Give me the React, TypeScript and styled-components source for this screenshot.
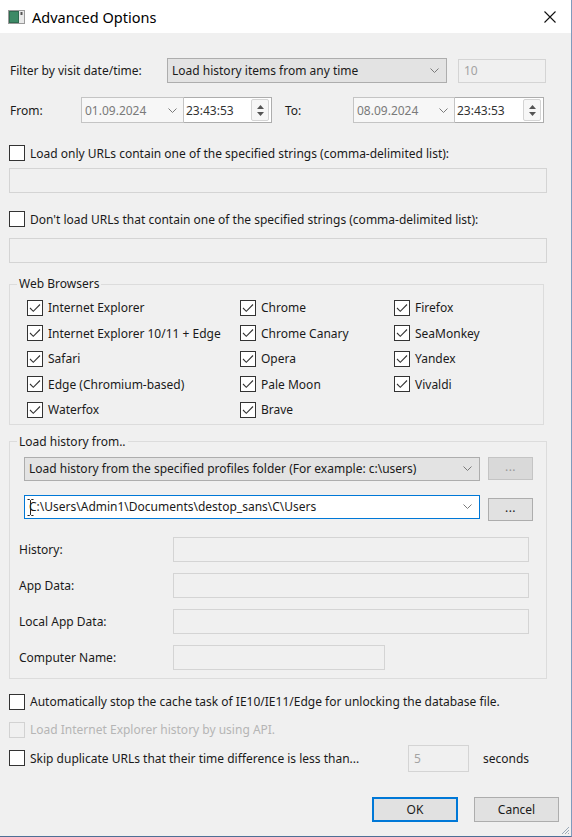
import React from 'react';
import styled, { createGlobalStyle } from 'styled-components';

const Global = createGlobalStyle`
  html, body { margin: 0; padding: 0; background: #f0f0f0; }
  body {
    font-family: "Noto Sans", "DejaVu Sans", sans-serif;
    font-size: 12px;
    color: #1a1a1a;
  }
  * { box-sizing: border-box; }
`;

const Window = styled.div`
  width: 572px;
  height: 837px;
  background: #f0f0f0;
  border-right: 1px solid #7f9bbd;
  border-bottom: 1px solid #4f6f96;
  display: flex;
  flex-direction: column;
  position: relative;
  overflow: hidden;
`;

const TitleBar = styled.div`
  height: 33px;
  flex-shrink: 0;
  background: #ffffff;
  display: flex;
  align-items: center;
  padding: 0 15px 0 8px;
`;

const TitleText = styled.span`
  flex: 1;
  margin-left: 7px;
  font-family: "Noto Sans", "Open Sans", sans-serif;
  font-size: 14.5px;
  color: #000;
`;

const Body = styled.div`
  display: flex;
  flex-direction: column;
  padding-left: 9px;
`;

const Row = styled.div<{ $top: number; $h: number }>`
  display: flex;
  align-items: center;
  margin-top: ${(p) => p.$top}px;
  height: ${(p) => p.$h}px;
  flex-shrink: 0;
`;

const Label = styled.span<{ $w: number; $pl?: number; $ml?: number }>`
  width: ${(p) => p.$w}px;
  padding-left: ${(p) => p.$pl ?? 0}px;
  margin-left: ${(p) => p.$ml ?? 0}px;
  flex-shrink: 0;
  white-space: nowrap;
`;

const Combo = styled.div<{ $w: number; $h: number; $focus?: boolean }>`
  position: relative;
  width: ${(p) => p.$w}px;
  height: ${(p) => p.$h}px;
  flex-shrink: 0;
  display: flex;
  align-items: center;
  padding: 0 7px 0 4px;
  background: ${(p) => (p.$focus ? '#ffffff' : '#e3e3e3')};
  border: 1px solid ${(p) => (p.$focus ? '#0078d7' : '#adadad')};
`;

const ComboText = styled.span`
  flex: 1;
  white-space: nowrap;
  overflow: hidden;
`;

const Field = styled.div<{ $w: number; $h: number; $ml?: number }>`
  width: ${(p) => p.$w}px;
  height: ${(p) => p.$h}px;
  margin-left: ${(p) => p.$ml ?? 0}px;
  flex-shrink: 0;
  display: flex;
  align-items: center;
  padding-left: 5px;
  background: #f0f0f0;
  border: 1px solid #d4d4d4;
  color: #a3a3a3;
`;

const DatePart = styled.div<{ $w: number }>`
  width: ${(p) => p.$w}px;
  height: 26px;
  flex-shrink: 0;
  display: flex;
  align-items: center;
  padding: 0 6px 0 3px;
  background: #f7f7f7;
  border: 1px solid #c4c4c4;
  color: #7a7a7a;
`;

const TimePart = styled.div<{ $w: number }>`
  width: ${(p) => p.$w}px;
  height: 26px;
  flex-shrink: 0;
  display: flex;
  align-items: center;
  padding: 0 2px 0 2px;
  background: #ffffff;
  border: 1px solid #adadad;
  border-left: none;
  color: #333;
`;

const Spin = styled.div`
  width: 18px;
  height: 22px;
  border: 1px solid #d4d4d4;
  border-radius: 2px;
  background: #f7f7f7;
  display: flex;
  flex-direction: column;
  align-items: center;
  justify-content: space-around;
  padding: 3px 0;
`;

const CheckRow = styled.div<{ $top: number; $w?: number; $disabled?: boolean }>`
  display: flex;
  align-items: center;
  gap: 5px;
  height: 16px;
  margin-top: ${(p) => p.$top}px;
  width: ${(p) => (p.$w ? `${p.$w}px` : 'auto')};
  flex-shrink: 0;
  white-space: nowrap;
  color: ${(p) => (p.$disabled ? '#b5b5b5' : '#1a1a1a')};
`;

const Box = styled.span<{ $disabled?: boolean }>`
  width: 16px;
  height: 16px;
  flex-shrink: 0;
  border: 1px solid ${(p) => (p.$disabled ? '#d2d2d2' : '#333333')};
  background: ${(p) => (p.$disabled ? '#f0f0f0' : '#ffffff')};
  display: flex;
  align-items: center;
  justify-content: center;
`;

const WideField = styled.div<{ $top: number }>`
  width: 538px;
  height: 25px;
  margin-top: ${(p) => p.$top}px;
  background: #f0f0f0;
  border: 1px solid #d4d4d4;
  flex-shrink: 0;
`;

const Group = styled.fieldset<{ $top: number; $w: number }>`
  margin: ${(p) => p.$top}px 0 0 0;
  padding: 0;
  width: ${(p) => p.$w}px;
  border: 1px solid #dcdcdc;
  min-inline-size: auto;
  flex-shrink: 0;
`;

const Legend = styled.legend`
  margin-left: 7px;
  padding: 0 2px;
  line-height: 14px;
  font-size: 12px;
`;

const BrowserGrid = styled.div`
  display: grid;
  grid-template-columns: 213px 154px 1fr;
  grid-auto-rows: 25.5px;
  align-items: center;
  padding: 4px 0 1px 17px;
`;

const LoadInner = styled.div`
  display: flex;
  flex-direction: column;
  padding: 0 0 8px 9px;
`;

const ComboRow = styled.div<{ $top: number }>`
  display: flex;
  align-items: flex-start;
  margin-top: ${(p) => p.$top}px;
  padding-left: 5px;
`;

const DotsButton = styled.div<{ $disabled?: boolean; $mt?: number }>`
  width: 45px;
  height: 23px;
  margin-left: 8px;
  margin-top: ${(p) => p.$mt ?? 0}px;
  display: flex;
  align-items: center;
  justify-content: center;
  background: ${(p) => (p.$disabled ? '#d9d9d9' : '#e1e1e1')};
  border: 1px solid ${(p) => (p.$disabled ? '#c4c4c4' : '#adadad')};
  color: ${(p) => (p.$disabled ? '#9a9a9a' : '#222')};
  letter-spacing: 0.5px;
  padding-bottom: 3px;
`;

const ButtonBar = styled.div`
  display: flex;
  justify-content: flex-end;
  gap: 16px;
  margin-top: 25px;
  padding-right: 12px;
`;

const Button = styled.div<{ $default?: boolean; $w: number }>`
  width: ${(p) => p.$w}px;
  height: 25px;
  display: flex;
  align-items: center;
  justify-content: center;
  background: #e1e1e1;
  border: ${(p) => (p.$default ? '2px solid #0078d7' : '1px solid #adadad')};
  color: #1a1a1a;
`;

const Grip = styled.svg`
  position: absolute;
  right: 1px;
  bottom: 1px;
`;

const MouseCursor = styled.svg`
  position: absolute;
  left: 2px;
  top: 3px;
`;

const Chevron = () => (
  <svg width="9" height="5" viewBox="0 0 9 5">
    <path d="M0.5 0.5 L4.5 4.5 L8.5 0.5" fill="none" stroke="#7a7a7a" strokeWidth="1" />
  </svg>
);

const Check = () => (
  <svg width="12" height="10" viewBox="0 0 12 10">
    <path d="M1 5 L4.3 8.3 L11 1.5" fill="none" stroke="#333" strokeWidth="1.1" />
  </svg>
);

const AppIcon = () => (
  <svg width="17" height="14" viewBox="0 0 17 14">
    <rect x="0.5" y="0.5" width="16" height="13" fill="#e9e9e9" stroke="#9a9a9a" />
    <rect x="1" y="1" width="10" height="12" fill="#2f6b50" />
    <rect x="2" y="2" width="8" height="10" fill="#3d8a66" />
    <rect x="12.5" y="2" width="2" height="3" fill="#555" />
  </svg>
);

const CloseIcon = () => (
  <svg width="12" height="12" viewBox="0 0 12 12">
    <path d="M0.5 0.5 L11.5 11.5 M11.5 0.5 L0.5 11.5" stroke="#111" strokeWidth="1.1" />
  </svg>
);

const SpinArrows = () => (
  <Spin>
    <svg width="7" height="4" viewBox="0 0 7 4"><path d="M0 4 L3.5 0 L7 4 Z" fill="#555" /></svg>
    <svg width="7" height="4" viewBox="0 0 7 4"><path d="M0 0 L3.5 4 L7 0 Z" fill="#555" /></svg>
  </Spin>
);

const DateTime = ({ date, dw, tw }: { date: string; dw: number; tw: number }) => (
  <>
    <DatePart $w={dw}>
      <ComboText>{date}</ComboText>
      <Chevron />
    </DatePart>
    <TimePart $w={tw}>
      <ComboText>23:43:53</ComboText>
      <SpinArrows />
    </TimePart>
  </>
);

const Checkbox = ({ label, checked, disabled, top = 0, w }: { label: string; checked?: boolean; disabled?: boolean; top?: number; w?: number }) => (
  <CheckRow $top={top} $w={w} $disabled={disabled}>
    <Box $disabled={disabled}>{checked && <Check />}</Box>
    <span>{label}</span>
  </CheckRow>
);

const browsers = [
  'Internet Explorer', 'Chrome', 'Firefox',
  'Internet Explorer 10/11 + Edge', 'Chrome Canary', 'SeaMonkey',
  'Safari', 'Opera', 'Yandex',
  'Edge (Chromium-based)', 'Pale Moon', 'Vivaldi',
  'Waterfox', 'Brave',
];

const pathFields: { label: string; w: number; top: number }[] = [
  { label: 'History:', w: 356, top: 16 },
  { label: 'App Data:', w: 356, top: 11 },
  { label: 'Local App Data:', w: 356, top: 11 },
  { label: 'Computer Name:', w: 212, top: 11 },
];

export default function App() {
  return (
    <>
      <Global />
      <Window>
        <TitleBar>
          <AppIcon />
          <TitleText>Advanced Options</TitleText>
          <CloseIcon />
        </TitleBar>
        <Body>
          <Row $top={25} $h={25}>
            <Label $w={158} $pl={1}>Filter by visit date/time:</Label>
            <Combo $w={280} $h={25}>
              <ComboText>Load history items from any time</ComboText>
              <Chevron />
            </Combo>
            <Field $w={88} $h={24} $ml={11}>10</Field>
          </Row>
          <Row $top={14} $h={26}>
            <Label $w={72} $pl={1}>From:</Label>
            <DateTime date="01.09.2024" dw={103} tw={88} />
            <Label $w={68} $ml={13}>To:</Label>
            <DateTime date="08.09.2024" dw={102} tw={89} />
          </Row>
          <Checkbox top={22} label="Load only URLs contain one of the specified strings (comma-delimited list):" />
          <WideField $top={7} />
          <Checkbox top={18} label="Don't load URLs that contain one of the specified strings (comma-delimited list):" />
          <WideField $top={11} />
          <Group $top={14} $w={535}>
            <Legend>Web Browsers</Legend>
            <BrowserGrid>
              {browsers.map((b) => (
                <Checkbox key={b} label={b} checked />
              ))}
            </BrowserGrid>
          </Group>
          <Group $top={10} $w={538}>
            <Legend>Load history from..</Legend>
            <LoadInner>
              <ComboRow $top={8}>
                <Combo $w={456} $h={24}>
                  <ComboText>Load history from the specified profiles folder (For example: c:\users)</ComboText>
                  <Chevron />
                </Combo>
                <DotsButton $disabled>...</DotsButton>
              </ComboRow>
              <ComboRow $top={14}>
                <Combo $w={456} $h={24} $focus>
                  <ComboText>C:\Users\Admin1\Documents\destop_sans\C\Users</ComboText>
                  <Chevron />
                  <MouseCursor width="7" height="17" viewBox="0 0 7 17">
                    <path d="M0.5 0.5 H2.5 L3.5 1.5 L4.5 0.5 H6.5 M3.5 1.5 V15.5 M0.5 16.5 H2.5 L3.5 15.5 L4.5 16.5 H6.5" fill="none" stroke="#222" strokeWidth="1" />
                  </MouseCursor>
                </Combo>
                <DotsButton $mt={3}>...</DotsButton>
              </ComboRow>
              {pathFields.map((f) => (
                <Row key={f.label} $top={f.top} $h={25}>
                  <Label $w={154}>{f.label}</Label>
                  <Field $w={f.w} $h={25} />
                </Row>
              ))}
            </LoadInner>
          </Group>
          <Checkbox top={15} label="Automatically stop the cache task of IE10/IE11/Edge for unlocking the database file." />
          <Checkbox top={12} disabled label="Load Internet Explorer history by using API." />
          <Row $top={7} $h={27}>
            <Checkbox w={399} label="Skip duplicate URLs that their time difference is less than..." />
            <Field $w={61} $h={27}>5</Field>
            <Label $w={60} $ml={14}>seconds</Label>
          </Row>
          <ButtonBar>
            <Button $w={86} $default>OK</Button>
            <Button $w={85}>Cancel</Button>
          </ButtonBar>
        </Body>
        <Grip width="10" height="10" viewBox="0 0 10 10">
          <path d="M9 2 L2 9 M9 5 L5 9 M9 8 L8 9" stroke="#9aa9b8" strokeWidth="1" />
        </Grip>
      </Window>
    </>
  );
}
